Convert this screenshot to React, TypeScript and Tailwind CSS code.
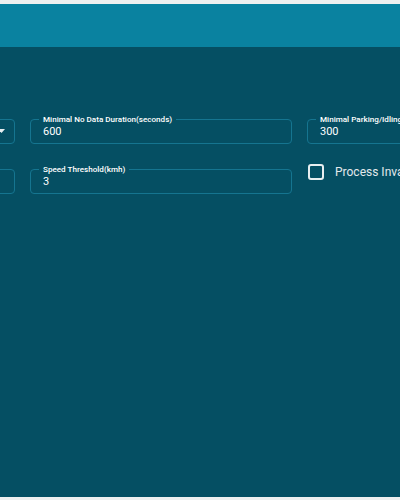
import React from "react";

function Field({ label, value, select }: { label?: string; value?: string; select?: boolean }) {
  return (
    <div className="relative h-[25px] rounded-[4px] border border-[#157590] flex items-center pl-[12px]">
      {label && (
        <span className="absolute left-[8px] top-[-6px] px-[4px] bg-[#054f63] text-[8.1px] leading-[10px] font-medium text-white whitespace-nowrap">
          {label}
        </span>
      )}
      {value && <span className="text-[11px] leading-[13px] text-white">{value}</span>}
      {select && (
        <svg className="absolute right-[9px] top-[9px]" width="7" height="5" viewBox="0 0 7 5">
          <path d="M0 0 L7 0 L3.5 4 Z" fill="#e6eef0" />
        </svg>
      )}
    </div>
  );
}

export default function App() {
  return (
    <div className="w-[400px] h-[500px] overflow-hidden flex flex-col" style={{ fontFamily: "Roboto, 'Noto Sans', sans-serif" }}>
      <div className="h-[4px] bg-[#eef0f0] shrink-0" />
      <div className="h-[43px] bg-[#0a82a0] shrink-0" />
      <div className="flex-1 bg-[#054f63] overflow-hidden pt-[72px]">
        <div className="grid grid-cols-[262px_262px_262px] gap-x-[15px] gap-y-[25px] ml-[-247px] w-[816px]">
          <Field select />
          <Field label="Minimal No Data Duration(seconds)" value="600" />
          <Field label="Minimal Parking/Idling Duration(seconds)" value="300" />
          <Field />
          <Field label="Speed Threshold(kmh)" value="3" />
          <div className="h-[25px] flex items-center gap-[11px] pl-[1px] mt-[-10px]">
            <div className="w-[16px] h-[16px] rounded-[3px] border-2 border-[#e8eef0]" />
            <span className="text-[12px] text-[#e3e9ec] whitespace-nowrap">Process Invalid Data</span>
          </div>
        </div>
      </div>
      <div className="h-[3px] bg-[#eef0f0] shrink-0" />
    </div>
  );
}
